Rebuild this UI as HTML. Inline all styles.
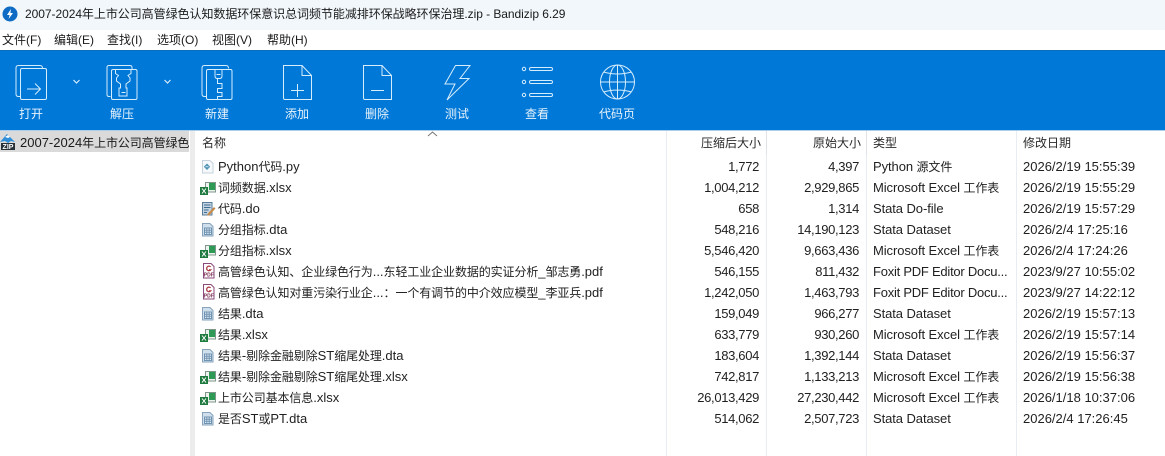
<!DOCTYPE html>
<html lang="zh"><head><meta charset="utf-8"><title>Bandizip</title>
<style>
*{box-sizing:border-box}
html,body{margin:0;padding:0;width:1165px;height:456px;overflow:hidden;background:#fff}
body{position:relative;font:13px/17px "Liberation Sans","Noto Sans CJK SC",sans-serif;color:#1a1a1a}
i{font-style:normal;font-size:12px;letter-spacing:-.1px}
.a{position:absolute;white-space:nowrap}
#title{left:0;top:0;width:1165px;height:30px;background:#f2f7fb}
#menu span{position:absolute;top:32px;white-space:nowrap;font-size:12px;color:#1a1a1a}
#tb{left:0;top:50px;width:1165px;height:80px;background:#0078d7;border-top:1px solid #0a6dbd}
.lbl{position:absolute;top:106px;width:60px;text-align:center;color:#e8f3fc;font-size:12px}
.r{text-align:right}
.row{position:absolute;left:0;width:1165px;height:21px}
.row span{position:absolute;top:2px;white-space:nowrap;color:#1f1f1f}
.n{left:218px}.c{left:660px;width:99px;text-align:right;letter-spacing:-.33px}.o{left:760px;width:99px;text-align:right;letter-spacing:-.33px}.t{left:873px;letter-spacing:-.08px}.d{left:1023px}
.row span.f{letter-spacing:-.24px}
.row svg{position:absolute;left:200px;top:1px}
.h{position:absolute;top:135px;color:#2a2a2a;font-size:12px}
.v{position:absolute;top:131px;width:1px;height:325px;background:#e8edf3}
.vh{position:absolute;top:131px;width:1px;height:24px;background:#dfe3e8}
</style></head><body>
<div class="a" id="title"></div>
<svg class="a" style="left:2px;top:6px" width="16" height="16" viewBox="0 0 16 16"><circle cx="8" cy="8" r="7.5" fill="#0f6cc4"/><path d="M9 3L5 9h2.600L6.600 13 11 7H8.400z" fill="#fff"/></svg>
<div class="a" style="left:25px;top:6px;color:#1a1a1a;font-size:12px;letter-spacing:-.05px">2007-2024年上市公司高管绿色认知数据环保意识总词频节能减排环保战略环保治理.zip - Bandizip 6.29</div>
<div id="menu"><span style="left:2px">文件(F)</span><span style="left:54px">编辑(E)</span><span style="left:107px">查找(I)</span><span style="left:157px">选项(O)</span><span style="left:212px">视图(V)</span><span style="left:267px">帮助(H)</span></div>
<div class="a" id="tb"></div>
<svg class="a" style="left:0;top:50px" width="700" height="60" viewBox="0 50 700 60" fill="none" stroke="#d6edfc" stroke-width="1">
<path d="M20 96.500h-1.500q-2.500 0-2.500-2.500V68q0-2.500 2.500-2.500H40q2.500 0 2.500 3"/><rect x="20.500" y="68.500" width="26" height="31" rx="1.500"/><path d="M27 89h13M35 83.500l5.500 5.500-5.500 5.500"/>
<path d="M110.500 96.500H109q-2 0-2-2V67.500q0-2 2-2h21q2 0 2 2V69"/><rect x="111.500" y="69.500" width="25.500" height="30" rx="1.500"/><path d="M115.500 70v3.500l3 2-2 2.500v3l4 3v4h-1.500v8h8v-8H126v-4l4-3v-3l-2-2.500 3-2V70M121.500 92.500h4"/>
<path d="M206 96.500h-1.500q-2.500 0-2.500-2.500V68q0-2.500 2.500-2.500H226q2.500 0 2.500 3"/><rect x="206.500" y="69.500" width="25.500" height="30" rx="1.500"/><path d="M215 70v6q0 2.500 2.500 2.500h2q2.500 0 2.500-2.500v-6M216.500 74.500h4M217.500 78.500v5h4.500v5h-4.500v4h4.500v4h-4.500v3"/>
<path d="M283.500 65.500H302l9.500 10v24H285q-1.500 0-1.500-1.500zM302 66v9.500h9.500M291 90.500h13M297.500 84v13"/>
<path d="M363.500 65.500H382l9.500 10v24H365q-1.500 0-1.500-1.500zM382 66v9.500h9.500M371 90.500h13"/>
<path d="M455.500 65.500H470l-10 13h9l-22 21.500 8-16h-10z"/>
<circle cx="524" cy="69" r="1.700"/><circle cx="524" cy="82" r="1.700"/><circle cx="524" cy="95" r="1.700"/>
<rect x="529.500" y="67.500" width="23" height="3" rx="1.500"/><rect x="529.500" y="80.500" width="23" height="3" rx="1.500"/><rect x="529.500" y="93.500" width="23" height="3" rx="1.500"/>
<circle cx="617.500" cy="82" r="17"/><ellipse cx="617.500" cy="82" rx="8" ry="17"/><path d="M617.500 65v34M600.500 82h34M603.500 72q14 4 28 0M603.500 92q14-4 28 0"/>
<path d="M73.500 80l3 3 3-3M164.500 80l3 3 3-3" stroke-width="1.200"/>
</svg>
<div class="lbl" style="left:1px">打开</div><div class="lbl" style="left:92px">解压</div><div class="lbl" style="left:187px">新建</div><div class="lbl" style="left:267px">添加</div><div class="lbl" style="left:347px">删除</div><div class="lbl" style="left:427px">测试</div><div class="lbl" style="left:507px">查看</div><div class="lbl" style="left:587px">代码页</div>

<div class="a" style="left:0;top:130px;width:1165px;height:1px;background:#a9cdea"></div>
<div class="a" style="left:0;top:131px;width:189px;height:21px;background:#dadada"></div>
<svg class="a" style="left:0;top:132px" width="16" height="18" viewBox="0 0 16 18"><path d="M0 10L7 2l8 8-4-1-3 2-3-2z" fill="#2f8fd8"/><path d="M5 5l3-2 2 2-2 1z" fill="#fff"/><rect x="1" y="11" width="14" height="7" fill="#263238"/><text x="8" y="17" font-size="7" font-weight="700" fill="#fff" text-anchor="middle" font-family="Liberation Sans">ZIP</text></svg>
<div class="a" style="left:20px;top:134px;width:169px;overflow:hidden;color:#1a1a1a">2007-2024<i>年上市公司高管绿色</i></div>
<div class="a" style="left:190px;top:131px;width:5px;height:325px;background:#ececec"></div>

<div class="h" style="left:202px">名称</div><div class="h r" style="left:660px;width:101px">压缩后大小</div><div class="h r" style="left:760px;width:101px">原始大小</div><div class="h" style="left:873px">类型</div><div class="h" style="left:1023px">修改日期</div>
<svg class="a" style="left:427px;top:131px" width="11" height="6" fill="none" stroke="#777"><path d="M1 5l4.500-4 4.500 4"/></svg>
<div class="v" style="left:666px"></div><div class="v" style="left:766px"></div><div class="v" style="left:866px"></div><div class="v" style="left:1016px"></div>
<div class="vh" style="left:766px"></div><div class="vh" style="left:866px"></div>

<svg width="0" height="0" style="position:absolute"><defs>
<g id="py"><path d="M2.500 3.500h7.500l3 3v9.500H2.500z" fill="#f6f9fb" stroke="#c6d3de"/><path d="M7 6.500l3.200 3.200L7 13 3.800 9.700z" fill="#4f93b5"/><path d="M5.500 9.700h3" stroke="#cfe4ee"/></g>
<g id="xl"><rect x="5.500" y="4.500" width="10" height="9.500" fill="#eef3ef" stroke="#7f978a"/><rect x="9" y="5" width="6" height="7" fill="#2f9a55"/><rect x="0" y="9" width="8" height="8" fill="#1e7a3f"/><path d="M2 10.500l4 5M6 10.500l-4 5" stroke="#fff"/></g>
<g id="do"><path d="M2.500 3.500h9.500v12.500H2.500z" fill="#c3d3e1" stroke="#5a7c98"/><path d="M4 6h6.500M4 8.500h6.500M4 11h4.500M4 13.500h3" stroke="#3e6d93"/><path d="M7.500 15l6.500-7 1.500 1.500-6.500 7H7.500z" fill="#c98a45"/></g>
<g id="dt"><path d="M2.500 3.500H10l3 3v9.500H2.500z" fill="#cfdfec" stroke="#86a3bb"/><path d="M4.500 8h7v6.500h-7zM4.500 10.200h7M4.500 12.300h7M6.800 8v6.500M9.200 8v6.500" stroke="#6f93b2" fill="#e6eef5"/></g>
<g id="pf"><path d="M3.500 1.500H11l3 3v11.500H3.500z" fill="#fff" stroke="#8a4a7a"/><path d="M10.600 4.800a2.300 2.300 0 1 0 .2 3H9" fill="none" stroke="#a8323c" stroke-width="1.200"/><text x="8.800" y="14.500" font-size="5" font-weight="700" fill="#7a2c50" text-anchor="middle" font-family="Liberation Sans">PDF</text></g>
</defs></svg>

<div class="row" style="top:156px"><svg width="18" height="18"><use href="#py"/></svg><span class="n">Python<i>代码</i>.py</span><span class="c">1,772</span><span class="o">4,397</span><span class="t">Python <i>源文件</i></span><span class="d">2026/2/19 15:55:39</span></div>
<div class="row" style="top:177px"><svg width="18" height="18"><use href="#xl"/></svg><span class="n"><i>词频数据</i>.xlsx</span><span class="c">1,004,212</span><span class="o">2,929,865</span><span class="t">Microsoft Excel <i>工作表</i></span><span class="d">2026/2/19 15:55:29</span></div>
<div class="row" style="top:198px"><svg width="18" height="18"><use href="#do"/></svg><span class="n"><i>代码</i>.do</span><span class="c">658</span><span class="o">1,314</span><span class="t">Stata Do-file</span><span class="d">2026/2/19 15:57:29</span></div>
<div class="row" style="top:219px"><svg width="18" height="18"><use href="#dt"/></svg><span class="n"><i>分组指标</i>.dta</span><span class="c">548,216</span><span class="o">14,190,123</span><span class="t">Stata Dataset</span><span class="d">2026/2/4 17:25:16</span></div>
<div class="row" style="top:240px"><svg width="18" height="18"><use href="#xl"/></svg><span class="n"><i>分组指标</i>.xlsx</span><span class="c">5,546,420</span><span class="o">9,663,436</span><span class="t">Microsoft Excel <i>工作表</i></span><span class="d">2026/2/4 17:24:26</span></div>
<div class="row" style="top:261px"><svg width="18" height="18"><use href="#pf"/></svg><span class="n"><i>高管绿色认知、企业绿色行为</i>...<i>东轻工业企业数据的实证分析</i>_<i>邹志勇</i>.pdf</span><span class="c">546,155</span><span class="o">811,432</span><span class="t f">Foxit PDF Editor Docu...</span><span class="d">2023/9/27 10:55:02</span></div>
<div class="row" style="top:282px"><svg width="18" height="18"><use href="#pf"/></svg><span class="n"><i>高管绿色认知对重污染行业企</i>...<i>：一个有调节的中介效应模型</i>_<i>李亚兵</i>.pdf</span><span class="c">1,242,050</span><span class="o">1,463,793</span><span class="t f">Foxit PDF Editor Docu...</span><span class="d">2023/9/27 14:22:12</span></div>
<div class="row" style="top:303px"><svg width="18" height="18"><use href="#dt"/></svg><span class="n"><i>结果</i>.dta</span><span class="c">159,049</span><span class="o">966,277</span><span class="t">Stata Dataset</span><span class="d">2026/2/19 15:57:13</span></div>
<div class="row" style="top:324px"><svg width="18" height="18"><use href="#xl"/></svg><span class="n"><i>结果</i>.xlsx</span><span class="c">633,779</span><span class="o">930,260</span><span class="t">Microsoft Excel <i>工作表</i></span><span class="d">2026/2/19 15:57:14</span></div>
<div class="row" style="top:345px"><svg width="18" height="18"><use href="#dt"/></svg><span class="n"><i>结果</i>-<i>剔除金融剔除</i>ST<i>缩尾处理</i>.dta</span><span class="c">183,604</span><span class="o">1,392,144</span><span class="t">Stata Dataset</span><span class="d">2026/2/19 15:56:37</span></div>
<div class="row" style="top:366px"><svg width="18" height="18"><use href="#xl"/></svg><span class="n"><i>结果</i>-<i>剔除金融剔除</i>ST<i>缩尾处理</i>.xlsx</span><span class="c">742,817</span><span class="o">1,133,213</span><span class="t">Microsoft Excel <i>工作表</i></span><span class="d">2026/2/19 15:56:38</span></div>
<div class="row" style="top:387px"><svg width="18" height="18"><use href="#xl"/></svg><span class="n"><i>上市公司基本信息</i>.xlsx</span><span class="c">26,013,429</span><span class="o">27,230,442</span><span class="t">Microsoft Excel <i>工作表</i></span><span class="d">2026/1/18 10:37:06</span></div>
<div class="row" style="top:408px"><svg width="18" height="18"><use href="#dt"/></svg><span class="n"><i>是否</i>ST<i>或</i>PT.dta</span><span class="c">514,062</span><span class="o">2,507,723</span><span class="t">Stata Dataset</span><span class="d">2026/2/4 17:26:45</span></div>
</body></html>
